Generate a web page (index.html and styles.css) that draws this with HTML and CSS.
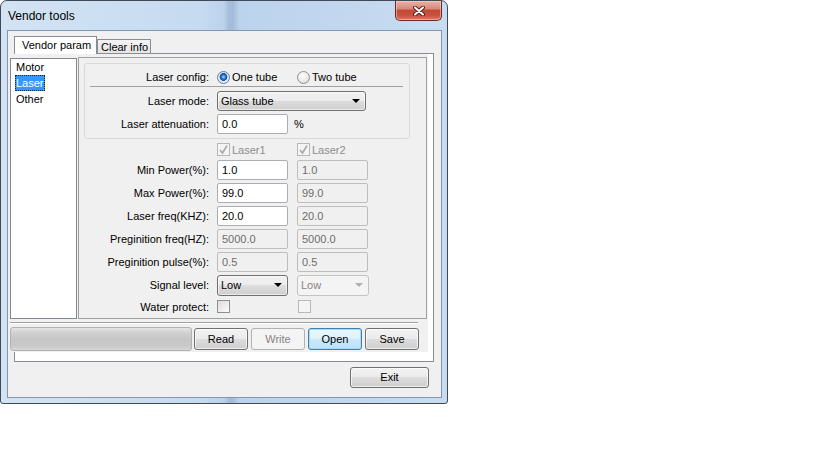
FILE: index.html
```html
<!DOCTYPE html>
<html lang="en">

<head>
    <meta charset="UTF-8">
    <title>Vendor tools</title>
    <link rel="stylesheet" href="styles.css">
</head>

<body>
    <div class="window">
        <div class="titlebar">
            <span class="title">Vendor tools</span>
            <div class="close">
                <svg width="12" height="10" viewBox="0 0 12 10">
                    <path d="M2 1.5 L10 8.5 M10 1.5 L2 8.5" stroke="#5a1d14" stroke-width="4" stroke-linecap="round" />
                    <path d="M2 1.5 L10 8.5 M10 1.5 L2 8.5" stroke="#fff" stroke-width="2" stroke-linecap="round" />
                </svg>
            </div>
        </div>
        <div class="client">
            <div class="tabs">
                <div class="tab active">Vendor param</div>
                <div class="tab">Clear info</div>
            </div>
            <div class="pane">
                <div class="page">
                    <div class="top">
                        <div class="list">
                            <div class="item">Motor</div>
                            <div class="item"><span class="sel">Laser</span></div>
                            <div class="item">Other</div>
                        </div>
                        <div class="panel">
                            <div class="group">
                                <div class="row cfg">
                                    <span class="lbl">Laser config:</span>
                                    <span class="opt first"><span class="radio on"></span>One tube</span>
                                    <span class="opt"><span class="radio"></span>Two tube</span>
                                </div>
                                <div class="sep"></div>
                                <div class="row mode">
                                    <span class="lbl">Laser mode:</span>
                                    <div class="combo wide">Glass tube<span class="arrow"></span></div>
                                </div>
                                <div class="row">
                                    <span class="lbl">Laser attenuation:</span>
                                    <div class="edit">0.0</div>
                                    <span class="unit">%</span>
                                </div>
                            </div>
                            <div class="form">
                                <div class="row chkrow">
                                    <span class="lbl"></span>
                                    <span class="opt first dis"><span class="check dis"><svg width="11" height="11" viewBox="0 0 11 11"><path d="M2 6 L4.5 9 L9 1.5" fill="none" stroke="#a9a9a9" stroke-width="1.6" /></svg></span>Laser1</span>
                                    <span class="opt dis"><span class="check dis"><svg width="11" height="11" viewBox="0 0 11 11"><path d="M2 6 L4.5 9 L9 1.5" fill="none" stroke="#a9a9a9" stroke-width="1.6" /></svg></span>Laser2</span>
                                </div>
                                <div class="row">
                                    <span class="lbl">Min Power(%):</span>
                                    <div class="edit">1.0</div>
                                    <div class="edit dis">1.0</div>
                                </div>
                                <div class="row">
                                    <span class="lbl">Max Power(%):</span>
                                    <div class="edit">99.0</div>
                                    <div class="edit dis">99.0</div>
                                </div>
                                <div class="row">
                                    <span class="lbl">Laser freq(KHZ):</span>
                                    <div class="edit">20.0</div>
                                    <div class="edit dis">20.0</div>
                                </div>
                                <div class="row">
                                    <span class="lbl">Preginition freq(HZ):</span>
                                    <div class="edit dis">5000.0</div>
                                    <div class="edit dis">5000.0</div>
                                </div>
                                <div class="row">
                                    <span class="lbl">Preginition pulse(%):</span>
                                    <div class="edit dis">0.5</div>
                                    <div class="edit dis">0.5</div>
                                </div>
                                <div class="row">
                                    <span class="lbl">Signal level:</span>
                                    <div class="combo small">Low<span class="arrow"></span></div>
                                    <div class="combo small dis">Low<span class="arrow"></span></div>
                                </div>
                                <div class="row water">
                                    <span class="lbl">Water protect:</span>
                                    <span class="check"></span>
                                    <span class="check dis second"></span>
                                </div>
                            </div>
                        </div>
                    </div>
                    <div class="hr"></div>
                    <div class="actions">
                        <div class="progress"></div>
                        <div class="btn">Read</div>
                        <div class="btn dis">Write</div>
                        <div class="btn focus">Open</div>
                        <div class="btn">Save</div>
                    </div>
                </div>
            </div>
            <div class="btn exit">Exit</div>
        </div>
    </div>
</body>

</html>
```

FILE: styles.css
```css
* {
    margin: 0;
    padding: 0;
    box-sizing: border-box;
}

body {
    background-color: #fff;
    font-family: "Liberation Sans", Arial, sans-serif;
    font-size: 11px;
    color: #000;
}

/* window frame */
.window {
    width: 448px;
    height: 404px;
    border: 1px solid #3f4a59;
    border-radius: 7px 7px 3px 3px;
    background: linear-gradient(90deg, #d3e3f4 0%, #c6daf0 45%, #bcd2ec 50%, #a6bfdc 51%, #a3bcda 52%, #bcd3ed 53.5%, #c3d8ef 80%, #c8dcf1 100%);
    display: flex;
    flex-direction: column;
    overflow: hidden;
}

.titlebar {
    height: 29px;
    display: flex;
    align-items: flex-start;
}

.title {
    font-size: 12px;
    line-height: 14px;
    padding: 8px 0 0 7px;
}

.close {
    margin-left: auto;
    margin-right: 5px;
    width: 47px;
    height: 20px;
    border: 1px solid #6e2a21;
    border-top: none;
    border-radius: 0 0 5px 5px;
    background: linear-gradient(#e8b3a8 0%, #d88a7b 40%, #c24a36 50%, #c7523d 75%, #dc7a62 100%);
    box-shadow: inset 0 0 0 1px rgba(255, 220, 210, .5);
    display: flex;
    align-items: center;
    justify-content: center;
}

.client {
    flex: 1;
    margin: 0 5px 5px 6px;
    border: 1px solid #8497b0;
    background-color: #f0f0f0;
    display: flex;
    flex-direction: column;
}

/* tabs */
.tabs {
    margin-top: 5px;
    padding-left: 6px;
    height: 17px;
    display: flex;
    align-items: flex-end;
}

.tab {
    height: 14px;
    width: 54px;
    border: 1px solid #898c95;
    border-bottom: none;
    padding-left: 3px;
    line-height: 14px;
    background: linear-gradient(#f3f3f3, #e5e5e5);
}

.tab.active {
    position: relative;
    z-index: 1;
    width: 83px;
    height: 18px;
    margin-bottom: -1px;
    padding: 1px 0 0 7px;
    background: #fff;
}

.pane {
    margin-left: 6px;
    width: 420px;
    height: 309px;
    border: 1px solid #898c95;
    background-color: #fff;
}

.page {
    margin-left: -7px;
    width: 420px;
    height: 298px;
    padding-left: 2px;
    background-color: #f0f0f0;
}

.top {
    display: flex;
    align-items: flex-start;
}

/* list */
.list {
    margin-top: 4px;
    width: 67px;
    height: 261px;
    border: 1px solid #828790;
    background-color: #fff;
}

.item {
    line-height: 16px;
    height: 16px;
    padding-left: 5px;
}

.sel {
    display: inline-block;
    margin-left: -1px;
    padding: 0 1px;
    background-color: #3399ff;
    color: #fff;
    outline: 1px dotted #222;
    outline-offset: -1px;
    line-height: 16px;
}

/* right panel */
.panel {
    margin: 3px 0 0 1px;
    width: 349px;
    height: 262px;
    border: 1px solid #a0a0a0;
    padding: 5px 0 0 5px;
}

.group {
    width: 326px;
    height: 76px;
    border: 1px solid #d9d9d9;
    border-radius: 3px;
    padding-top: 4px;
}

.row {
    display: flex;
    align-items: center;
    height: 20px;
}

.lbl {
    width: 125px;
    margin-right: 8px;
    text-align: right;
    white-space: nowrap;
}

.group .lbl {
    width: 124px;
}

.row.cfg {
    height: 18px;
}

.sep {
    height: 1px;
    margin: 0 6px 0 5px;
    background-color: #a0a0a0;
}

.row.mode {
    margin-top: 4px;
}

.group .row+.row {
    margin-top: 3px;
}

.opt {
    display: flex;
    align-items: center;
}

.opt.first {
    width: 80px;
}

.opt.dis {
    color: #8d8d8d;
}

.radio {
    width: 13px;
    height: 13px;
    margin-right: 2px;
    border: 1px solid #8e8f8f;
    border-radius: 50%;
    background: radial-gradient(circle at 40% 35%, #fff 0%, #e8e8e8 60%, #cfcfcf 100%);
}

.radio.on {
    border-color: #5d7d9e;
    background: radial-gradient(circle at 50% 45%, #b5e0ff 0, #3d8de0 1.5px, #1c5ab3 3px, #1d4f94 3.6px, #dfe9f3 4.2px, #f4f7fb 100%);
}

.check {
    width: 13px;
    height: 13px;
    margin-right: 2px;
    border: 1px solid #8e8f8f;
    background: linear-gradient(135deg, #dcdcdc, #fcfcfc);
}

.check.dis {
    border-color: #b8b8b8;
    background: #f4f4f4;
}

.check svg {
    display: block;
}

.check.second {
    margin-left: 66px;
}

.edit {
    width: 71px;
    height: 20px;
    border: 1px solid #abadb3;
    border-radius: 2px;
    background-color: #fff;
    padding-left: 4px;
    line-height: 18px;
}

.edit.dis {
    border-color: #bdbdbd;
    background-color: #f0f0f0;
    color: #6d6d6d;
}

.edit+.edit,
.combo+.combo {
    margin-left: 9px;
}

.unit {
    margin-left: 6px;
}

.combo {
    height: 20px;
    border: 1px solid #707070;
    border-radius: 3px;
    background: linear-gradient(#f2f2f2 0%, #ebebeb 50%, #dddddd 50%, #cfcfcf 100%);
    box-shadow: inset 0 0 0 1px rgba(255, 255, 255, .6);
    padding-left: 3px;
    line-height: 18px;
    display: flex;
    align-items: center;
    justify-content: space-between;
}

.combo.wide {
    width: 149px;
}

.combo.small {
    width: 71px;
    height: 21px;
}

.combo.dis {
    width: 72px;
    border-color: #c3c3c3;
    background: #f4f4f4;
    box-shadow: none;
    color: #838383;
}

.arrow {
    width: 0;
    height: 0;
    margin-right: 5px;
    border-left: 4px solid transparent;
    border-right: 4px solid transparent;
    border-top: 4px solid #000;
}

.combo.dis .arrow {
    border-top-color: #b0b0b0;
}

.form {
    margin-top: 4px;
}

.row.chkrow {
    height: 13px;
    margin-bottom: 4px;
}

.form .row+.row {
    margin-top: 3px;
}

.form .row.water {
    margin-top: 5px;
    height: 13px;
}

.form .chkrow+.row {
    margin-top: 0;
}

/* bottom bar */
.hr {
    margin-top: 3px;
    width: 408px;
    height: 2px;
    border-top: 1px solid #a0a0a0;
    border-bottom: 1px solid #fff;
}

.actions {
    margin-top: 3px;
    display: flex;
    align-items: flex-start;
}

.progress {
    width: 182px;
    height: 24px;
    border: 1px solid #b2b2b2;
    border-radius: 3px;
    background: linear-gradient(#e4e4e4 0%, #d2d2d2 20%, #c6c6c6 50%, #c8c8c8 80%, #d6d6d6 100%);
    margin-right: 2px;
}

.btn {
    width: 54px;
    height: 22px;
    margin-top: 1px;
    border: 1px solid #707070;
    border-radius: 3px;
    background: linear-gradient(#f2f2f2 0%, #ebebeb 50%, #dddddd 50%, #cfcfcf 100%);
    box-shadow: inset 0 0 0 1px rgba(255, 255, 255, .65);
    text-align: center;
    line-height: 20px;
}

.btn+.btn {
    margin-left: 3px;
}

.btn.dis {
    border-color: #adb2b5;
    background: #f4f4f4;
    box-shadow: none;
    color: #838383;
}

.btn.focus {
    border-color: #3c7fb1;
    background: linear-gradient(#eaf6fd 0%, #dff1fb 50%, #cbe8f8 50%, #bfe1f5 100%);
    box-shadow: inset 0 0 0 1px #a6dcf6;
}

.btn.exit {
    align-self: flex-end;
    width: 79px;
    height: 21px;
    margin: 5px 12px 0 0;
    line-height: 19px;
}
```
